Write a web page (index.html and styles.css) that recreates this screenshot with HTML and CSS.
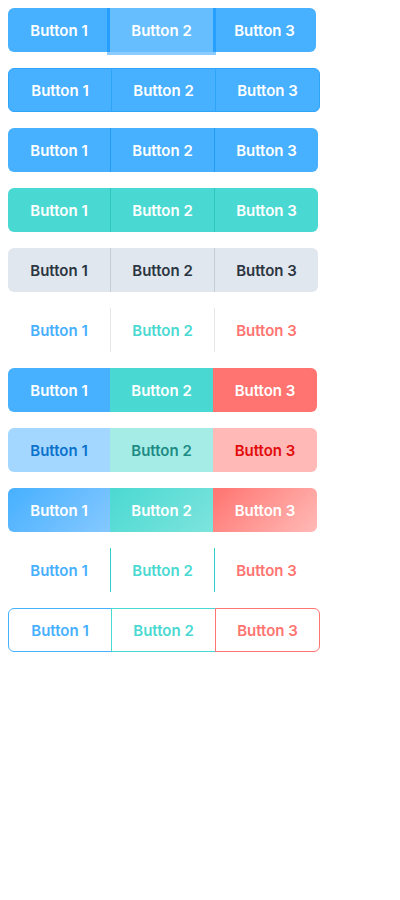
FILE: index.html
```html
<!DOCTYPE html>
<html lang="en">
<head>
<meta charset="utf-8">
<title>Button groups</title>
<link rel="stylesheet" href="styles.css">
</head>
<body>
<div class="stack">
  <div class="group g-plain">
    <button class="btn">Button 1</button>
    <button class="btn is-focus">Button 2</button>
    <button class="btn">Button 3</button>
  </div>
  <div class="group g-bordered">
    <button class="btn">Button 1</button>
    <button class="btn">Button 2</button>
    <button class="btn">Button 3</button>
  </div>
  <div class="group g-divided g-blue">
    <button class="btn">Button 1</button>
    <button class="btn">Button 2</button>
    <button class="btn">Button 3</button>
  </div>
  <div class="group g-divided g-teal">
    <button class="btn">Button 1</button>
    <button class="btn">Button 2</button>
    <button class="btn">Button 3</button>
  </div>
  <div class="group g-divided g-grey">
    <button class="btn">Button 1</button>
    <button class="btn">Button 2</button>
    <button class="btn">Button 3</button>
  </div>
  <div class="group g-divided g-ghost">
    <button class="btn c-blue">Button 1</button>
    <button class="btn c-teal">Button 2</button>
    <button class="btn c-red">Button 3</button>
  </div>
  <div class="group g-multi">
    <button class="btn b-blue">Button 1</button>
    <button class="btn b-teal">Button 2</button>
    <button class="btn b-red">Button 3</button>
  </div>
  <div class="group g-multi">
    <button class="btn l-blue">Button 1</button>
    <button class="btn l-teal">Button 2</button>
    <button class="btn l-red">Button 3</button>
  </div>
  <div class="group g-multi">
    <button class="btn gr-blue">Button 1</button>
    <button class="btn gr-teal">Button 2</button>
    <button class="btn gr-red">Button 3</button>
  </div>
  <div class="group g-divided g-line">
    <button class="btn c-blue">Button 1</button>
    <button class="btn c-teal">Button 2</button>
    <button class="btn c-red">Button 3</button>
  </div>
  <div class="group g-outline">
    <button class="btn o-blue">Button 1</button>
    <button class="btn o-teal">Button 2</button>
    <button class="btn o-red">Button 3</button>
  </div>
</div>
</body>
</html>
```

FILE: styles.css
```css
html, body {
  background: #ffffff;
}
body {
  margin: 8px;
  font-family: Inter, "Noto Sans", "Liberation Sans", sans-serif;
}
.stack {
  display: flex;
  flex-direction: column;
  align-items: flex-start;
  gap: 16px;
}
.group {
  display: flex;
  border-radius: 6px;
}
.btn {
  box-sizing: border-box;
  width: 103px;
  height: 44px;
  padding: 0;
  margin: 0;
  border: 0;
  font-family: inherit;
  font-size: 15px;
  font-weight: 600;
  color: #ffffff;
  background: #47b0ff;
  cursor: pointer;
  position: relative;
}
.group .btn:first-child {
  border-radius: 6px 0 0 6px;
}
.group .btn:last-child {
  border-radius: 0 6px 6px 0;
}

/* row 1 */
.g-plain .btn:first-child {
  width: 102px;
}
.g-plain .btn.is-focus {
  background: #66beff;
  box-shadow: 0 0 0 3px rgba(0, 140, 255, 0.45);
  z-index: 1;
}

/* row 2 */
.g-bordered .btn {
  width: 105px;
  border: 1px solid #2ea4fb;
}
.g-bordered .btn:first-child {
  width: 104px;
}
.g-bordered .btn + .btn {
  margin-left: -1px;
}

/* divided rows */
.g-divided .btn:first-child {
  width: 102px;
}
.g-divided .btn + .btn {
  width: 104px;
  border-left: 1px solid #1f9df8;
}
.g-teal .btn {
  background: #4ad9d2;
}
.g-teal .btn + .btn {
  border-left: 1px solid #2cc7bf;
}
.g-grey .btn {
  background: #e1e7ee;
  color: #2b3541;
}
.g-grey .btn + .btn {
  border-left: 1px solid #c3ced9;
}
.g-ghost .btn,
.g-line .btn {
  background: transparent;
}
.g-ghost .btn + .btn {
  border-left: 1px solid #e6e6e6;
}
.g-line .btn + .btn {
  border-left: 1px solid #2fcfc7;
}
.c-blue { color: #47b0ff; }
.c-teal { color: #4ad9d2; }
.c-red { color: #ff7470; }

/* multi-colour rows */
.g-multi .btn:first-child { width: 102px; }
.g-multi .btn:last-child { width: 104px; }
.b-blue { background: #47b0ff; }
.b-teal { background: #4ad9d2; }
.b-red { background: #ff7470; }

.btn.l-blue { background: #a4d7ff; color: #0b72cc; }
.btn.l-teal { background: #a5ece7; color: #1e8b84; }
.btn.l-red { background: #ffb9b6; color: #e30b0b; }

.btn.gr-blue { background: linear-gradient(135deg, #47b0ff 0%, #85c8ff 100%); }
.btn.gr-teal { background: linear-gradient(135deg, #4ad9d2 0%, #7de4dd 100%); }
.btn.gr-red { background: linear-gradient(135deg, #ff7470 0%, #ffbab7 100%); }

/* outline row */
.g-outline .btn {
  width: 105px;
  background: #ffffff;
  border: 1px solid;
}
.g-outline .btn:first-child {
  width: 104px;
}
.g-outline .btn + .btn {
  margin-left: -1px;
}
.btn.o-blue { border-color: #47b0ff; color: #47b0ff; }
.btn.o-teal { border-color: #4ad9d2; color: #4ad9d2; }
.btn.o-red { border-color: #ff7470; color: #ff7470; }
```
